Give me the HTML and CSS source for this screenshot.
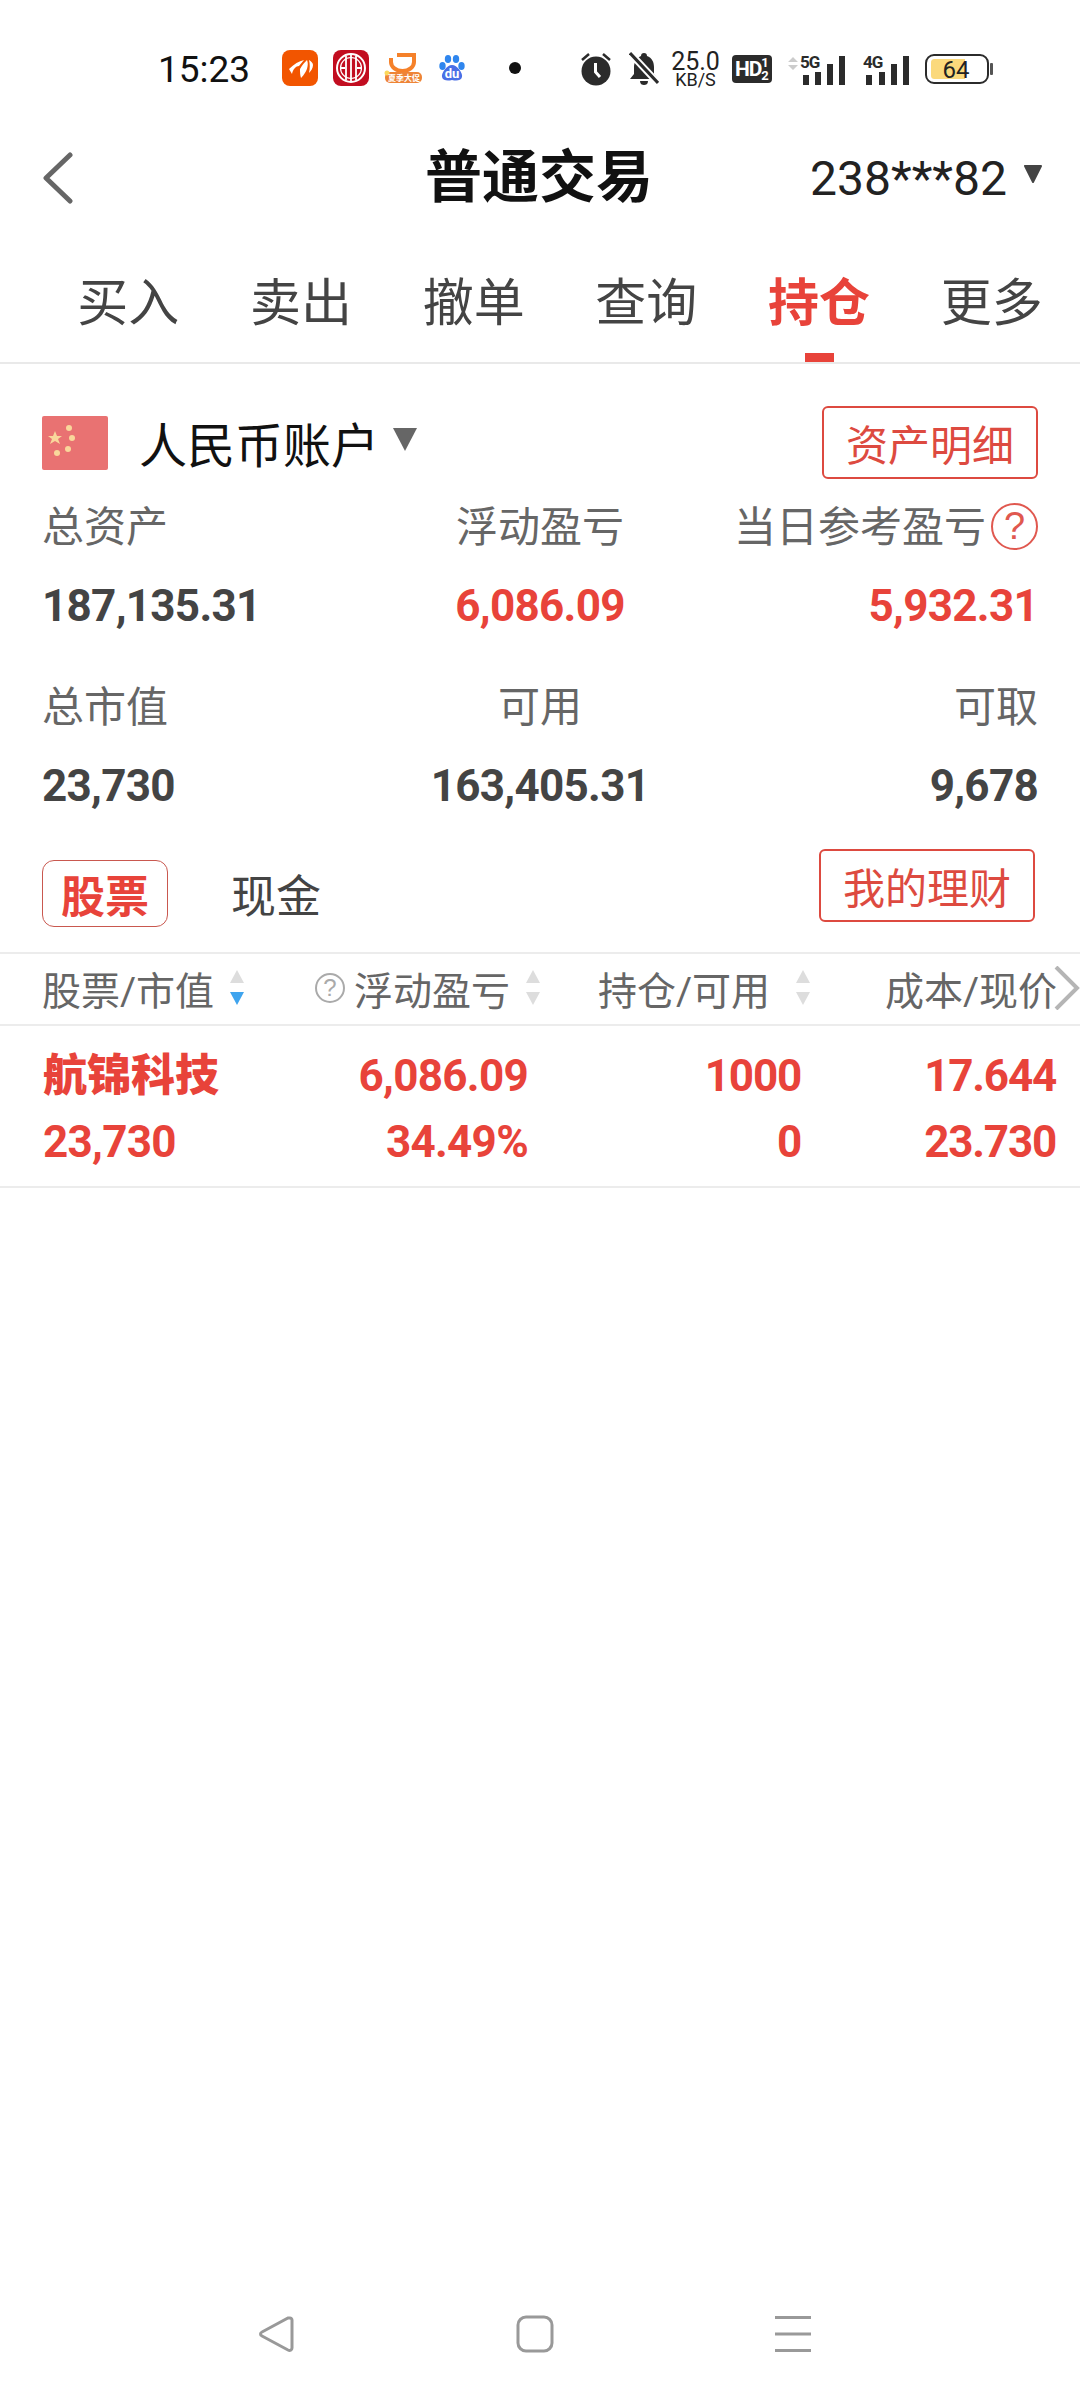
FILE: index.html
```html
<!DOCTYPE html>
<html lang="zh-CN">
<head>
  <meta charset="UTF-8">
  <meta name="viewport" content="width=device-width, initial-scale=1.0">
  <title>普通交易</title>
  <link rel="stylesheet" href="styles.css">
</head>
<body>
  <div class="page">
    <!-- status bar -->
    <div class="statusbar">
      <span class="time">15:23</span>
      <div class="notifs">
        <svg width="36" height="36" viewBox="0 0 36 36"><rect width="36" height="36" rx="8" fill="#f25500"/><path d="M7 19C12 14 17 11 22 10L17 16C14 16 11 19 10 24Z" fill="#fff"/><path d="M18 19C20 15 23 12 25 10C27 15 25 22 19 28C18 25 18 22 18 19Z" fill="#fff"/><path d="M27 10C29 11 31 13 31 15C31 18 29 21 27 23C28 18 28 14 27 10Z" fill="#fff"/></svg>
        <svg width="36" height="36" viewBox="0 0 36 36"><rect width="36" height="36" rx="8" fill="#c20d20"/><circle cx="18" cy="18" r="14" fill="none" stroke="#fff" stroke-width="2"/><circle cx="18" cy="18" r="10.5" fill="none" stroke="#fff" stroke-width="1.2"/><path d="M13 6V30M18 5V31M23 6V30M8 18H12M24 18H28" stroke="#fff" stroke-width="1.8" fill="none"/></svg>
        <svg width="40" height="30" viewBox="0 0 40 30"><path d="M7 5V9A11.5 9 0 0 0 30 9V2H13" fill="none" stroke="#f5812a" stroke-width="4"/><rect x="1" y="19" width="37" height="11" rx="5" fill="#ee8436"/><circle cx="3" cy="20" r="2.5" fill="#fbd75b"/><text class="promo" x="20" y="28">夏季大促</text></svg>
        <svg width="26" height="27" viewBox="0 0 26 27"><ellipse cx="3.5" cy="11" rx="3.2" ry="4" fill="#2f86ee"/><ellipse cx="9" cy="4" rx="3.2" ry="4" fill="#2f86ee"/><ellipse cx="17" cy="4" rx="3.2" ry="4" fill="#2f86ee"/><ellipse cx="22.5" cy="11" rx="3.2" ry="4" fill="#2f86ee"/><path d="M13 10C18 10 24 18 23 22C22 26 17 26 13 25C9 26 4 26 3 22C2 18 8 10 13 10Z" fill="#4a6fe6"/><text class="du" x="13" y="23">du</text></svg>
        <span class="dot"></span>
      </div>
      <div class="sysicons">
        <svg width="37" height="36" viewBox="0 0 37 36"><path d="M2 9L9 3M30 9L23 3" stroke="#2b2b2b" stroke-width="2.5" fill="none"/><circle cx="16" cy="20" r="14.5" fill="#2b2b2b"/><path d="M15.5 12V21L20 26" stroke="#fff" stroke-width="3" fill="none"/></svg>
        <svg width="30" height="34" viewBox="0 0 30 34"><path d="M15 1C17 1 18 2 18 4C23 6 25 10 25 15V22L29 27H1L5 22V15C5 10 8 6 12 4C12 2 13 1 15 1Z" fill="#2b2b2b"/><path d="M11 29H19C19 32 17 33 15 33C13 33 11 32 11 29Z" fill="#2b2b2b"/><path d="M1 1L29 31" stroke="#fff" stroke-width="7"/><path d="M1 1L29 31" stroke="#2b2b2b" stroke-width="3"/></svg>
        <div class="speed"><span class="speed-num">25.0</span><span class="speed-unit">KB/S</span></div>
        <svg width="40" height="28" viewBox="0 0 40 28"><rect width="40" height="28" rx="4" fill="#2b2b2b"/><text class="hd" x="3" y="21">HD</text><text class="hd-sub" x="33" y="12">1</text><text class="hd-sub" x="33" y="25">2</text></svg>
        <svg width="67" height="36" viewBox="0 -3 67 36"><path d="M9 3L14 8H4ZM9 16L14 11H4Z" fill="#ccc"/><text class="sig" x="16" y="14">5G</text><path d="M19 21h6v10h-6zM31 18h6v13h-6zM43 10h6v21h-6zM55 2h6v29h-6z" fill="#2b2b2b"/></svg>
        <svg width="50" height="36" viewBox="0 -3 50 36"><text class="sig" x="0" y="14">4G</text><path d="M3 21h6v10h-6zM16 18h6v13h-6zM28 10h6v21h-6zM40 2h6v29h-6z" fill="#2b2b2b"/></svg>
        <svg width="68" height="32" viewBox="0 0 68 32"><rect x="1" y="2" width="62" height="28" rx="8" fill="none" stroke="#2b2b2b" stroke-width="2"/><path d="M10 6H40V26H10C7 26 6 25 6 22V10C6 7 7 6 10 6Z" fill="#fbd97c"/><rect x="65" y="10" width="3" height="12" rx="1" fill="#555"/><text class="bat" x="31" y="25">64</text></svg>
      </div>
    </div>

    <!-- title bar -->
    <div class="topbar">
      <svg class="back" width="30" height="52" viewBox="0 0 30 52"><path d="M27 3L3 26L27 49" fill="none" stroke="#666" stroke-width="5" stroke-linecap="round" stroke-linejoin="round"/></svg>
      <h1 class="title">普通交易</h1>
      <div class="account-no">238***82<svg width="20" height="20" viewBox="0 0 20 20"><path d="M2 2H18L10 18Z" fill="#444" stroke="#444" stroke-width="2" stroke-linejoin="round"/></svg></div>
    </div>

    <!-- main tabs -->
    <div class="tabs">
      <div class="tab">买入<i></i></div>
      <div class="tab">卖出<i></i></div>
      <div class="tab">撤单<i></i></div>
      <div class="tab">查询<i></i></div>
      <div class="tab active">持仓<i></i></div>
      <div class="tab">更多<i></i></div>
    </div>

    <!-- account summary -->
    <div class="account-row">
      <svg class="flag" width="66" height="54" viewBox="0 0 66 54"><rect width="66" height="54" rx="2" fill="#e97272"/><g fill="#f9d79b"><path d="M13 15L15 20L20 20L16 23L18 28L13 25L8 28L10 23L6 20L11 20Z"/><circle cx="27" cy="12" r="3"/><circle cx="30" cy="22" r="3"/><circle cx="26" cy="33" r="3"/><circle cx="15" cy="37" r="3"/></g></svg>
      <span class="currency">人民币账户</span>
      <span class="caret"></span>
      <a class="outline-btn">资产明细</a>
    </div>

    <div class="summary">
      <div class="stat">
        <div class="stat-label">总资产</div>
        <div class="stat-value">187,135.31</div>
      </div>
      <div class="stat center">
        <div class="stat-label">浮动盈亏</div>
        <div class="stat-value red">6,086.09</div>
      </div>
      <div class="stat right">
        <div class="stat-label">当日参考盈亏<span class="help">?</span></div>
        <div class="stat-value red">5,932.31</div>
      </div>
      <div class="stat">
        <div class="stat-label">总市值</div>
        <div class="stat-value">23,730</div>
      </div>
      <div class="stat center">
        <div class="stat-label">可用</div>
        <div class="stat-value">163,405.31</div>
      </div>
      <div class="stat right">
        <div class="stat-label">可取</div>
        <div class="stat-value">9,678</div>
      </div>
    </div>

    <!-- holdings -->
    <div class="sub-tabs">
      <span class="sub-tab active">股票</span>
      <span class="sub-tab">现金</span>
      <a class="outline-btn finance">我的理财</a>
    </div>

    <div class="table-head">
      <div class="th first">股票/市值<span class="sort sorted"><i></i><i></i></span></div>
      <div class="th"><span class="help small">?</span>浮动盈亏<span class="sort"><i></i><i></i></span></div>
      <div class="th">持仓/可用<span class="sort wide"><i></i><i></i></span></div>
      <div class="th">成本/现价</div>
      <svg class="more" width="26" height="44" viewBox="0 0 26 44"><path d="M2 1L23 22L2 43" fill="none" stroke="#b5b5b5" stroke-width="4"/></svg>
    </div>

    <div class="holding">
      <div class="cell first"><b class="name">航锦科技</b><span>23,730</span></div>
      <div class="cell"><span>6,086.09</span><span>34.49%</span></div>
      <div class="cell tight"><span>1000</span><span>0</span></div>
      <div class="cell tight"><span>17.644</span><span>23.730</span></div>
    </div>

    <!-- system navigation -->
    <div class="navbar">
      <svg width="36" height="38" viewBox="0 0 36 38"><path d="M32 3C33 3 34 4 34 5V33C34 35 32 36 30 35L4 21C2 20 2 18 4 17L30 3Z" fill="none" stroke="#999" stroke-width="3"/></svg>
      <svg width="38" height="38" viewBox="0 0 38 38"><rect x="2" y="2" width="34" height="34" rx="8" fill="none" stroke="#999" stroke-width="3"/></svg>
      <svg width="36" height="38" viewBox="0 0 36 38"><path d="M0 2.5H36M0 19H36M0 35.5H36" stroke="#999" stroke-width="3"/></svg>
    </div>
  </div>
</body>
</html>
```

FILE: styles.css
```css
/* page */
* {
  box-sizing: border-box;
}
body {
  margin: 0;
  background: #fff;
  font-family: Roboto, "Noto Sans CJK SC", sans-serif;
  color: #444;
}
.page {
  position: relative;
  width: 1080px;
  height: 2400px;
  display: flex;
  flex-direction: column;
}

/* status bar */
.statusbar {
  height: 136px;
  padding-left: 158px;
  display: flex;
  align-items: center;
  color: #111;
}
.time {
  width: 92px;
  padding-top: 2px;
  font-size: 37px;
}
.notifs {
  margin-left: 32px;
  display: flex;
  align-items: center;
  gap: 15px;
}
.dot {
  width: 12px;
  height: 12px;
  margin-left: 29px;
  border-radius: 50%;
  background: #111;
}
.sysicons {
  position: absolute;
  left: 580px;
  top: 51px;
  height: 36px;
  display: flex;
  align-items: center;
  gap: 12px;
}
.speed {
  width: 49px;
  display: flex;
  flex-direction: column;
  align-items: center;
  color: #222;
}
.speed-num {
  font-size: 25px;
  line-height: 20px;
}
.speed-unit {
  font-size: 18px;
  line-height: 15px;
}
.promo {
  font: bold 8px "Noto Sans CJK SC", sans-serif;
  fill: #fff;
  text-anchor: middle;
}
.du {
  font: bold 13px Roboto, sans-serif;
  fill: #fff;
  text-anchor: middle;
}
.hd {
  font: bold 21px "Roboto", sans-serif;
  fill: #fff;
  letter-spacing: -1px;
}
.hd-sub {
  font: bold 13px Roboto, sans-serif;
  fill: #fff;
  text-anchor: middle;
}
.sig {
  font: bold 17px Roboto, sans-serif;
  fill: #2b2b2b;
  letter-spacing: -1px;
}
.bat {
  font: 24px Roboto, sans-serif;
  fill: #222;
  text-anchor: middle;
}

/* title bar */
.topbar {
  height: 84px;
  padding: 0 45px 0 43px;
  display: grid;
  grid-template-columns: 1fr auto 1fr;
  align-items: center;
}
.title {
  margin: 0;
  font-size: 57px;
  line-height: 84px;
  font-weight: 700;
  color: #111;
}
.account-no {
  justify-self: end;
  margin-right: -8px;
  display: flex;
  align-items: center;
  gap: 16px;
  font-size: 48px;
  color: #222;
}
.account-no svg {
  margin-top: -8px;
}

/* main tabs */
.tabs {
  height: 144px;
  padding: 54px 2px 0 42px;
  display: grid;
  grid-template-columns: repeat(6, 1fr);
  border-bottom: 2px solid #e9e9e9;
}
.tab {
  display: flex;
  flex-direction: column;
  align-items: center;
  font-size: 51px;
  line-height: 60px;
}
.tab i {
  width: 29px;
  height: 9px;
  margin: 19px 0 0 2px;
}
.tab.active {
  color: #e8433a;
  font-weight: 700;
}
.tab.active i {
  background: #e8433a;
}

/* account summary */
.account-row {
  margin-top: 42px;
  padding: 0 42px;
  height: 73px;
  display: flex;
  align-items: center;
}
.flag {
  margin-right: 31px;
}
.currency {
  font-size: 48px;
  margin-top: -2px;
  color: #111;
}
.caret {
  width: 0;
  height: 0;
  margin: -6px 0 0 14px;
  border-left: 12px solid transparent;
  border-right: 12px solid transparent;
  border-top: 23px solid #666;
}
.outline-btn {
  margin-left: auto;
  width: 216px;
  height: 73px;
  display: flex;
  align-items: center;
  justify-content: center;
  border: 2px solid #dd4a40;
  border-radius: 6px;
  color: #dd4a40;
  font-size: 42px;
}
.summary {
  margin-top: 24px;
  padding: 0 42px;
  display: grid;
  grid-template-columns: repeat(3, 1fr);
  row-gap: 54px;
}
.stat.center {
  text-align: center;
}
.stat.right {
  text-align: right;
}
.stat-label {
  height: 48px;
  margin-top: 1px;
  margin-bottom: -1px;
  display: flex;
  align-items: center;
  font-size: 42px;
  line-height: 48px;
  color: #666;
}
.stat.center .stat-label {
  justify-content: center;
}
.stat.right .stat-label {
  justify-content: flex-end;
}
.stat-value {
  margin-top: 31px;
  margin-bottom: -1px;
  font-size: 44px;
  line-height: 48px;
  font-weight: 700;
  letter-spacing: -0.7px;
  color: #444;
}
.red {
  color: #e8433a;
}
.help {
  width: 47px;
  height: 47px;
  margin-left: 5px;
  margin-top: -4px;
  display: flex;
  align-items: center;
  justify-content: center;
  border: 2px solid #e0584f;
  border-radius: 50%;
  color: #e0584f;
  font-size: 38px;
  font-family: "Liberation Sans", sans-serif;
}

/* holdings */
.sub-tabs {
  margin-top: 40px;
  height: 103px;
  padding: 0 45px 0 42px;
  display: flex;
  align-items: flex-start;
}
.sub-tab {
  margin-top: 11px;
  height: 67px;
  display: flex;
  align-items: center;
  font-size: 45px;
}
.sub-tab.active {
  width: 126px;
  margin-right: 63px;
  justify-content: center;
  border: 1.5px solid #c9584f;
  border-radius: 12px;
  color: #e8433a;
  font-size: 44px;
  font-weight: 700;
}
.table-head {
  position: relative;
  height: 74px;
  padding: 0 0 3px 42px;
  display: grid;
  grid-template-columns: 270px 228px 270px 247px;
  border-top: 2px solid #ececec;
  border-bottom: 2px solid #ececec;
}
.th {
  display: flex;
  align-items: center;
  justify-content: flex-end;
  font-size: 39px;
  color: #666;
}
.th.first {
  justify-content: flex-start;
}
.sort {
  margin-left: 16px;
  display: flex;
  flex-direction: column;
  gap: 9px;
}
.sort.wide {
  margin-left: 26px;
}
.sort i {
  width: 0;
  height: 0;
  border-left: 7.5px solid transparent;
  border-right: 7.5px solid transparent;
  border-bottom: 13px solid #ddd;
}
.sort i:last-child {
  border-bottom: 0;
  border-top: 13px solid #ddd;
}
.sort.sorted i:last-child {
  border-top-color: #3fa4ee;
}
.help.small {
  width: 30px;
  height: 30px;
  margin: 0 9px 0 0;
  border-color: #aaa;
  color: #aaa;
  font-size: 24px;
}
.more {
  position: absolute;
  right: 0;
  top: 12px;
}
.holding {
  height: 162px;
  padding: 26px 24px 0 43px;
  display: grid;
  grid-template-columns: 233px 252px 273px 255px;
  align-content: start;
  border-bottom: 2px solid #ececec;
}
.cell {
  display: flex;
  flex-direction: column;
  align-items: flex-end;
  gap: 18px;
  font-size: 44px;
  line-height: 48px;
  font-weight: 700;
  letter-spacing: -0.7px;
  color: #e8433a;
}
.cell.tight {
  letter-spacing: -1.2px;
}
.cell.first {
  align-items: flex-start;
}
.name {
  letter-spacing: 0;
}

/* system navigation */
.navbar {
  margin-top: auto;
  margin-bottom: 47px;
  padding: 0 269px 0 258px;
  display: flex;
  justify-content: space-between;
  align-items: center;
}
```
